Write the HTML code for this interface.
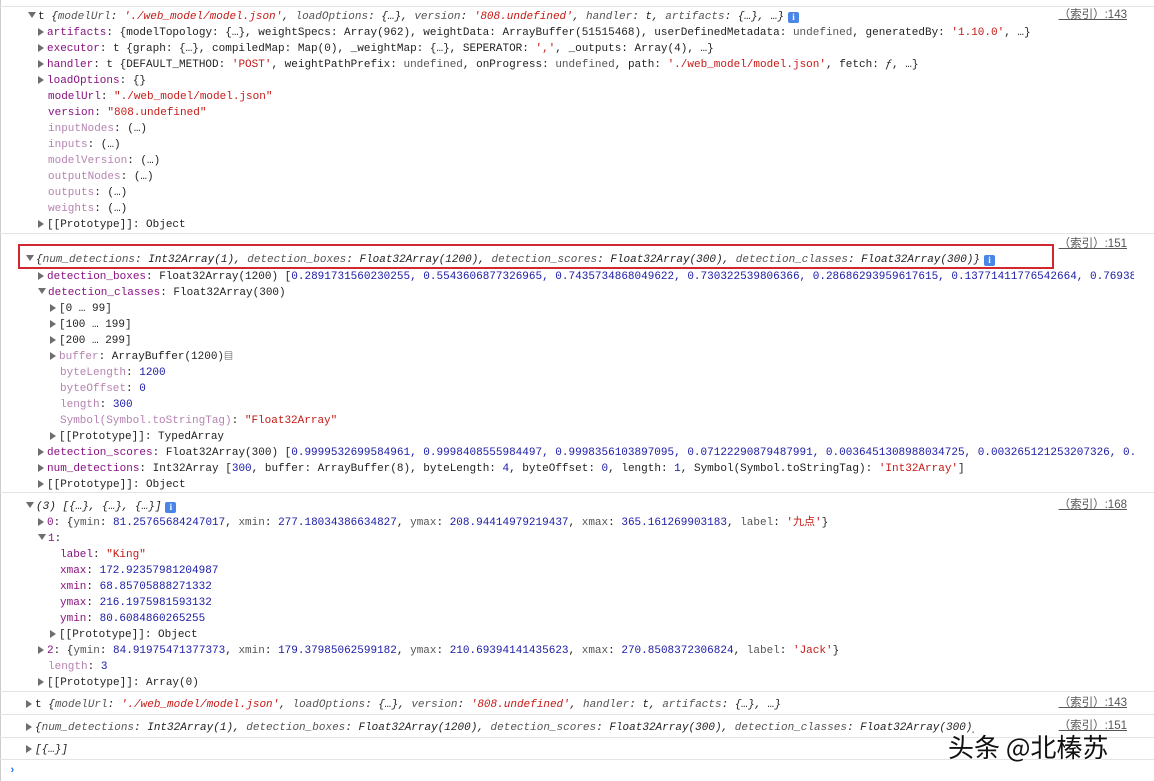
<!DOCTYPE html>
<html><head><meta charset="utf-8"><style>
html,body{margin:0;padding:0;background:#fff;width:1154px;height:781px;overflow:hidden;position:relative}
body{font-family:"Liberation Mono","Noto Sans CJK SC",monospace;font-size:11px;color:#222}
.l{position:absolute;height:16px;line-height:16px;white-space:nowrap;overflow:hidden;right:20px;margin-top:2px}
.a{display:inline-block;width:0;height:0;border-top:4px solid transparent;border-bottom:4px solid transparent;border-left:6px solid #6e6e6e;margin-right:3px;vertical-align:-1px}
.d{display:inline-block;width:0;height:0;border-left:4px solid transparent;border-right:4px solid transparent;border-top:6px solid #6e6e6e;margin-right:2px;vertical-align:1px}
.k{color:#881280}
.f{color:#b683b2}
.s{color:#c41a16}
.n{color:#1a1aa6}
.g{color:#555}
.i{font-style:italic}
.sep{position:absolute;left:0;right:0;height:1px;background:#e4e4e4}
.src{position:absolute;right:27px;color:#555;text-decoration:underline;font-family:"Liberation Sans","Noto Sans CJK SC",sans-serif;font-size:11.5px;height:16px;line-height:16px;margin-top:1px}
.info{display:inline-block;width:11px;height:11px;background:#4a86e8;border-radius:2px;color:#fff;font-size:9px;line-height:11px;text-align:center;font-weight:bold;vertical-align:-1px;margin-left:4px;font-family:"Liberation Serif",serif}
#lb{position:absolute;left:0;top:0;bottom:0;width:1px;background:#ccc}
</style></head><body>
<div id="lb"></div>
<div class="sep" style="top:6px"></div>
<div class="src" style="top:6px">（索引）:143</div>
<div class="l" style="top:7px;left:28px"><span class="d"></span>t <span class="i">{<span class="g">modelUrl</span>: <span class="s">'./web_model/model.json'</span>, <span class="g">loadOptions</span>: {…}, <span class="g">version</span>: <span class="s">'808.undefined'</span>, <span class="g">handler</span>: t, <span class="g">artifacts</span>: {…}, …}</span><span class="info">i</span></div>
<div class="l" style="top:23px;left:38px"><span class="a"></span><span class="k">artifacts</span>: {modelTopology: {…}, weightSpecs: Array(962), weightData: ArrayBuffer(51515468), userDefinedMetadata: <span class="g">undefined</span>, generatedBy: <span class="s">'1.10.0'</span>, …}</div>
<div class="l" style="top:39px;left:38px"><span class="a"></span><span class="k">executor</span>: t {graph: {…}, compiledMap: Map(0), _weightMap: {…}, SEPERATOR: <span class="s">','</span>, _outputs: Array(4), …}</div>
<div class="l" style="top:55px;left:38px"><span class="a"></span><span class="k">handler</span>: t {DEFAULT_METHOD: <span class="s">'POST'</span>, weightPathPrefix: <span class="g">undefined</span>, onProgress: <span class="g">undefined</span>, path: <span class="s">'./web_model/model.json'</span>, fetch: <span class="i">ƒ</span>, …}</div>
<div class="l" style="top:71px;left:38px"><span class="a"></span><span class="k">loadOptions</span>: {}</div>
<div class="l" style="top:87px;left:48px"><span class="k">modelUrl</span>: <span class="s">"./web_model/model.json"</span></div>
<div class="l" style="top:103px;left:48px"><span class="k">version</span>: <span class="s">"808.undefined"</span></div>
<div class="l" style="top:119px;left:48px"><span class="f">inputNodes</span>: (…)</div>
<div class="l" style="top:135px;left:48px"><span class="f">inputs</span>: (…)</div>
<div class="l" style="top:151px;left:48px"><span class="f">modelVersion</span>: (…)</div>
<div class="l" style="top:167px;left:48px"><span class="f">outputNodes</span>: (…)</div>
<div class="l" style="top:183px;left:48px"><span class="f">outputs</span>: (…)</div>
<div class="l" style="top:199px;left:48px"><span class="f">weights</span>: (…)</div>
<div class="l" style="top:215px;left:38px"><span class="a"></span>[[Prototype]]: Object</div>

<div class="sep" style="top:233px"></div>
<div class="src" style="top:235px">（索引）:151</div>
<div style="position:absolute;left:18px;top:244px;width:1032px;height:21px;border:2px solid #d0282e"></div>
<div class="l" style="top:250px;left:26px"><span class="d"></span><span class="i">{<span class="g">num_detections</span>: Int32Array(1), <span class="g">detection_boxes</span>: Float32Array(1200), <span class="g">detection_scores</span>: Float32Array(300), <span class="g">detection_classes</span>: Float32Array(300)}</span><span class="info">i</span></div>
<div class="l" style="top:267px;left:38px;right:20px"><span class="a"></span><span class="k">detection_boxes</span>: Float32Array(1200) [<span class="n">0.2891731560230255, 0.5543606877326965, 0.7435734868049622, 0.730322539806366, 0.28686293959617615, 0.13771411776542664, 0.76938</span></div>
<div class="l" style="top:283px;left:38px"><span class="d"></span><span class="k">detection_classes</span>: Float32Array(300)</div>
<div class="l" style="top:299px;left:50px"><span class="a"></span>[0 … 99]</div>
<div class="l" style="top:315px;left:50px"><span class="a"></span>[100 … 199]</div>
<div class="l" style="top:331px;left:50px"><span class="a"></span>[200 … 299]</div>
<div class="l" style="top:347px;left:50px"><span class="a"></span><span class="f">buffer</span>: ArrayBuffer(1200)<span style="font-size:9px">▤</span></div>
<div class="l" style="top:363px;left:60px"><span class="f">byteLength</span>: <span class="n">1200</span></div>
<div class="l" style="top:379px;left:60px"><span class="f">byteOffset</span>: <span class="n">0</span></div>
<div class="l" style="top:395px;left:60px"><span class="f">length</span>: <span class="n">300</span></div>
<div class="l" style="top:411px;left:60px"><span class="f">Symbol(Symbol.toStringTag)</span>: <span class="s">"Float32Array"</span></div>
<div class="l" style="top:427px;left:50px"><span class="a"></span>[[Prototype]]: TypedArray</div>
<div class="l" style="top:443px;left:38px;right:20px"><span class="a"></span><span class="k">detection_scores</span>: Float32Array(300) [<span class="n">0.9999532699584961, 0.9998408555984497, 0.9998356103897095, 0.07122290879487991, 0.0036451308988034725, 0.003265121253207326, 0.</span></div>
<div class="l" style="top:459px;left:38px"><span class="a"></span><span class="k">num_detections</span>: Int32Array [<span class="n">300</span>, buffer: ArrayBuffer(8), byteLength: <span class="n">4</span>, byteOffset: <span class="n">0</span>, length: <span class="n">1</span>, Symbol(Symbol.toStringTag): <span class="s">'Int32Array'</span>]</div>
<div class="l" style="top:475px;left:38px"><span class="a"></span>[[Prototype]]: Object</div>

<div class="sep" style="top:492px"></div>
<div class="src" style="top:496px">（索引）:168</div>
<div class="l" style="top:497px;left:26px"><span class="d"></span><span class="i">(3) [{…}, {…}, {…}]</span><span class="info">i</span></div>
<div class="l" style="top:513px;left:38px"><span class="a"></span><span class="k">0</span>: {<span class="g">ymin</span>: <span class="n">81.25765684247017</span>, <span class="g">xmin</span>: <span class="n">277.18034386634827</span>, <span class="g">ymax</span>: <span class="n">208.94414979219437</span>, <span class="g">xmax</span>: <span class="n">365.161269903183</span>, <span class="g">label</span>: <span class="s">'九点'</span>}</div>
<div class="l" style="top:529px;left:38px"><span class="d"></span><span class="k">1</span>:</div>
<div class="l" style="top:545px;left:60px"><span class="k">label</span>: <span class="s">"King"</span></div>
<div class="l" style="top:561px;left:60px"><span class="k">xmax</span>: <span class="n">172.92357981204987</span></div>
<div class="l" style="top:577px;left:60px"><span class="k">xmin</span>: <span class="n">68.85705888271332</span></div>
<div class="l" style="top:593px;left:60px"><span class="k">ymax</span>: <span class="n">216.1975981593132</span></div>
<div class="l" style="top:609px;left:60px"><span class="k">ymin</span>: <span class="n">80.6084860265255</span></div>
<div class="l" style="top:625px;left:50px"><span class="a"></span>[[Prototype]]: Object</div>
<div class="l" style="top:641px;left:38px"><span class="a"></span><span class="k">2</span>: {<span class="g">ymin</span>: <span class="n">84.91975471377373</span>, <span class="g">xmin</span>: <span class="n">179.37985062599182</span>, <span class="g">ymax</span>: <span class="n">210.69394141435623</span>, <span class="g">xmax</span>: <span class="n">270.8508372306824</span>, <span class="g">label</span>: <span class="s">'Jack'</span>}</div>
<div class="l" style="top:657px;left:48px"><span class="f">length</span>: <span class="n">3</span></div>
<div class="l" style="top:673px;left:38px"><span class="a"></span>[[Prototype]]: Array(0)</div>

<div class="sep" style="top:691px"></div>
<div class="src" style="top:694px">（索引）:143</div>
<div class="l" style="top:695px;left:26px"><span class="a"></span>t <span class="i">{<span class="g">modelUrl</span>: <span class="s">'./web_model/model.json'</span>, <span class="g">loadOptions</span>: {…}, <span class="g">version</span>: <span class="s">'808.undefined'</span>, <span class="g">handler</span>: t, <span class="g">artifacts</span>: {…}, …}</span></div>
<div class="sep" style="top:714px"></div>
<div class="src" style="top:717px">（索引）:151</div>
<div class="l" style="top:718px;left:26px;right:180px"><span class="a"></span><span class="i">{<span class="g">num_detections</span>: Int32Array(1), <span class="g">detection_boxes</span>: Float32Array(1200), <span class="g">detection_scores</span>: Float32Array(300), <span class="g">detection_classes</span>: Float32Array(300)}</span></div>
<div class="sep" style="top:737px"></div>
<div class="l" style="top:740px;left:26px"><span class="a"></span><span class="i">[{…}]</span></div>
<div class="sep" style="top:759px"></div>
<div class="l" style="top:761px;left:9px;color:#1a73e8;font-weight:bold">›</div>
<div style="position:absolute;left:948px;top:727px;font-family:'Noto Sans CJK SC',sans-serif;font-size:26px;color:#111;text-shadow:1px 1px 0 #fff,-1px -1px 0 #fff;line-height:40px;white-space:nowrap">头条 @北榛苏</div>
</body></html>
